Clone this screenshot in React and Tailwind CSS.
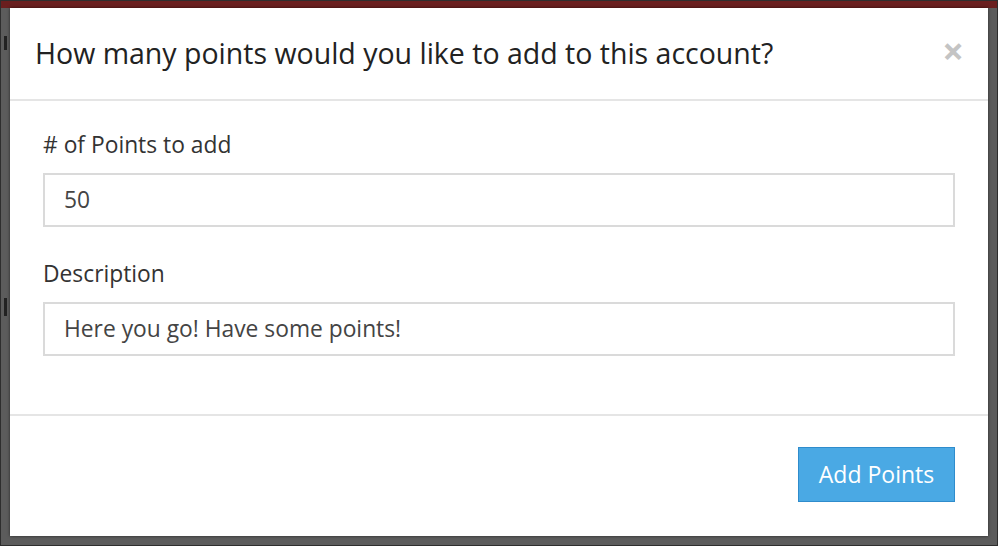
import React from "react";

export default function App() {
  return (
    <div
      className="w-[998px] h-[546px] flex flex-col bg-[#5c5c5c] border border-[#2e2e2e] overflow-hidden"
      style={{ fontFamily: '"Open Sans", "Noto Sans", sans-serif' }}
    >
      {/* page behind the backdrop */}
      <div className="h-[7px] shrink-0 bg-[#6a1f1f]" />

      <div className="flex-1 flex pr-[9px] pb-[9px]">
        <div className="w-[9px] shrink-0 flex flex-col items-center">
          <div className="mt-[28px] w-[3px] h-[14px] bg-[#222]" />
          <div className="mt-[248px] w-[3px] h-[18px] bg-[#222]" />
        </div>

        {/* modal */}
        <div className="flex-1 flex flex-col bg-white shadow-[0_0_3px_rgba(0,0,0,0.6)]">
          <div className="h-[93px] shrink-0 flex items-center justify-between pl-[25px] pr-[24px] border-b-2 border-[#e5e5e5]">
            <h1 className="text-[28.5px] text-[#222] leading-none">
              How many points would you like to add to this account?
            </h1>
            <button className="text-[38px] leading-none font-bold text-[#c4c4c4] -mt-[8px]">
              ×
            </button>
          </div>

          <div className="flex flex-col px-[33px] pt-[30px] pb-[58px] border-b-2 border-[#e5e5e5]">
            <label className="text-[22.8px] leading-[28px] text-[#333]">
              # of Points to add
            </label>
            <div className="mt-[14px] h-[54px] flex items-center px-[19px] border-2 border-[#dadada] text-[22.8px] text-[#444]">
              50
            </div>

            <label className="mt-[33px] text-[22.8px] leading-[28px] text-[#333]">
              Description
            </label>
            <div className="mt-[14px] h-[54px] flex items-center px-[19px] border-2 border-[#dadada] text-[22.8px] text-[#444]">
              Here you go! Have some points!
            </div>
          </div>

          <div className="flex-1 flex items-start justify-end px-[33px] pt-[31px]">
            <button className="w-[157px] h-[55px] bg-[#4aa9e4] border border-[#2f8ccc] text-white text-[23px]">
              Add Points
            </button>
          </div>
        </div>
      </div>
    </div>
  );
}
